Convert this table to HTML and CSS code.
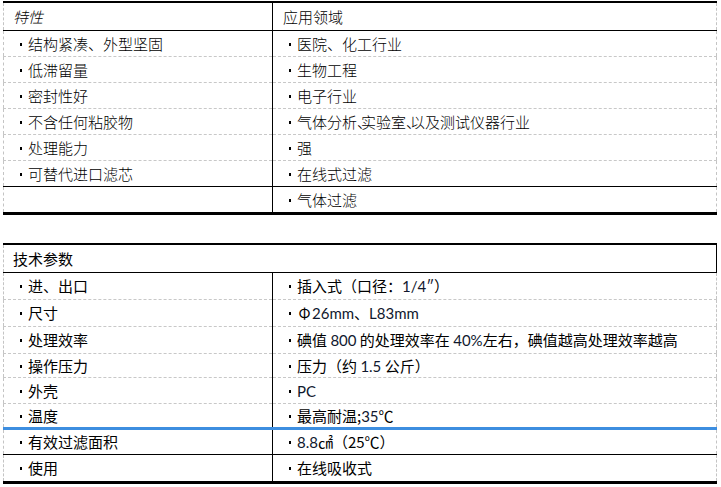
FILE: index.html
```html
<!DOCTYPE html>
<html lang="zh-CN">
<head>
<meta charset="utf-8">
<link rel="stylesheet" href="styles.css">
</head>
<body>
<div class="page">
  <table class="spec t1">
    <colgroup><col class="c1"><col class="c2"></colgroup>
    <tr class="head">
      <td class="l"><span class="it">特性</span></td>
      <td class="r">应用领域</td>
    </tr>
    <tr><td class="l"><span class="dot"></span>结构紧凑、外型坚固</td><td class="r"><span class="dot"></span>医院、化工行业</td></tr>
    <tr><td class="l"><span class="dot"></span>低滞留量</td><td class="r"><span class="dot"></span>生物工程</td></tr>
    <tr><td class="l"><span class="dot"></span>密封性好</td><td class="r"><span class="dot"></span>电子行业</td></tr>
    <tr><td class="l"><span class="dot"></span>不含任何粘胶物</td><td class="r"><span class="dot"></span>气体分析<span class="narrow">、</span>实验室<span class="narrow">、</span>以及测试仪器行业</td></tr>
    <tr><td class="l"><span class="dot"></span>处理能力</td><td class="r"><span class="dot"></span>强</td></tr>
    <tr><td class="l"><span class="dot"></span>可替代进口滤芯</td><td class="r"><span class="dot"></span>在线式过滤</td></tr>
    <tr class="solid-top last"><td class="l"></td><td class="r"><span class="dot"></span>气体过滤</td></tr>
  </table>

  <table class="spec t2">
    <colgroup><col class="c1"><col class="c2"></colgroup>
    <tr class="head"><td class="l full" colspan="2">技术参数</td></tr>
    <tr class="h26"><td class="l"><span class="dot"></span>进、出口</td><td class="r"><span class="dot"></span>插入式（口径：<span class="num">1/4″</span>）</td></tr>
    <tr class="h26"><td class="l"><span class="dot"></span>尺寸</td><td class="r"><span class="dot"></span><span class="phi">Φ</span><span class="num">26mm</span>、<span class="num">L83mm</span></td></tr>
    <tr class="h26"><td class="l"><span class="dot"></span>处理效率</td><td class="r"><span class="dot"></span>碘值 <span class="num">800</span> 的处理效率在 <span class="num">40%</span>左右，碘值越高处理效率越高</td></tr>
    <tr class="h23"><td class="l"><span class="dot"></span>操作压力</td><td class="r"><span class="dot"></span>压力（约 <span class="num">1.5</span> 公斤）</td></tr>
    <tr class="h25"><td class="l"><span class="dot"></span>外壳</td><td class="r"><span class="dot"></span><span class="num">PC</span></td></tr>
    <tr class="h23 blue"><td class="l"><span class="dot"></span>温度</td><td class="r"><span class="dot"></span>最高耐温;<span class="num">35</span>℃</td></tr>
    <tr class="h24"><td class="l"><span class="dot"></span>有效过滤面积</td><td class="r"><span class="dot"></span><span class="num">8.8</span>㎠（25℃）</td></tr>
    <tr class="h26 solid-top last"><td class="l"><span class="dot"></span>使用</td><td class="r"><span class="dot"></span>在线吸收式</td></tr>
  </table>
</div>
</body>
</html>
```
FILE: styles.css
```css
html, body {
  margin: 0;
  padding: 0;
  background: #ffffff;
}

.page {
  padding: 1px 0 0 3px;
  font-family: "Noto Sans CJK SC", "Noto Sans", sans-serif;
  font-size: 15px;
  color: #000;
}

.spec {
  border-collapse: collapse;
  width: 713px;
  table-layout: fixed;
  border-top: 2px solid #000;
  border-bottom: 3px solid #000;
  border-left: 1px dashed #c4c4c4;
  border-right: 1px dashed #c4c4c4;
}

.c1 { width: 269px; }
.c2 { width: 444px; }

.spec td {
  padding: 0;
  height: 25px;
  line-height: 18px;
  vertical-align: middle;
  white-space: nowrap;
  border-bottom: 1px dashed #c8c8c8;
}

.t1 td {
  font-weight: 300;
}

.spec td.l {
  padding-left: 16px;
  border-right: 1px solid #000;
}

.spec td.r {
  padding-left: 16px;
}

.spec tr.head td {
  height: 27px;
  border-bottom: 1px solid #000;
}

.spec tr.head td.l {
  padding-left: 9px;
}

.spec tr.head td.r {
  padding-left: 10px;
}

.spec tr.head td.full {
  border-right: 1px solid #000;
}

.spec tr.solid-top td {
  border-top: 1px solid #000;
}

.spec tr.last td {
  border-bottom: 3px solid #000;
}

.spec tr.blue td {
  border-bottom: 3px solid #3d8ee0;
}

.spec tr.h26 td { height: 26px; }
.spec tr.h25 td { height: 25px; }
.spec tr.h24 td { height: 24px; }
.spec tr.h23 td { height: 23px; }

.it {
  font-style: italic;
}

.dot {
  display: inline-block;
  width: 2px;
  height: 3px;
  background: #000;
  vertical-align: middle;
  margin-right: 6px;
  position: relative;
  top: -1px;
}

.narrow {
  letter-spacing: -11px;
}

.phi {
  display: inline-block;
  width: 15px;
  text-align: center;
}

.num {
  font-family: Lato, "Noto Sans", sans-serif;
  color: #10182e;
}

.t2 {
  margin-top: 28px;
}
```
